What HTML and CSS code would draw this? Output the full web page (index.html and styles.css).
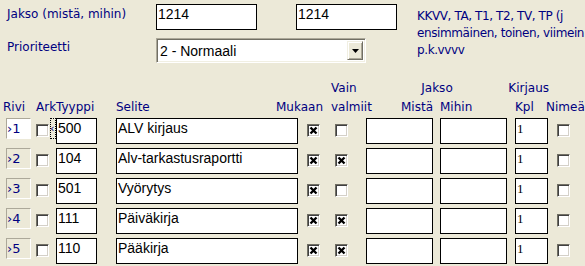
FILE: index.html
```html
<!DOCTYPE html>
<html lang="fi">
<head>
<meta charset="utf-8">
<title>Jakso</title>
<link rel="stylesheet" href="styles.css">
</head>
<body>
<div class="form">
  <div class="top">
    <div class="lbl lbl-jakso">Jakso (mistä, mihin)</div>
    <div class="tb tb-top">1214</div>
    <div class="tb tb-top">1214</div>
    <div class="hint">KKVV, TA, T1, T2, TV, TP (j<br>ensimmäinen, toinen, viimein<br>p.k.vvvv</div>
    <div class="lbl lbl-prio">Prioriteetti</div>
    <div class="select">
      <span class="select-text">2 - Normaali</span>
      <span class="select-btn"><svg width="7" height="4" viewBox="0 0 7 4"><path d="M0 0H7L3.5 4Z" fill="#000"/></svg></span>
    </div>
  </div>

  <div class="head head1">
    <span class="h h-vain">Vain</span>
    <span class="h h-jakso">Jakso</span>
    <span class="h h-kirjaus">Kirjaus</span>
  </div>
  <div class="head head2">
    <span class="h h-rivi">Rivi</span>
    <span class="h h-ark">Ark</span>
    <span class="h h-tyyppi">Tyyppi</span>
    <span class="h h-selite">Selite</span>
    <span class="h h-mukaan">Mukaan</span>
    <span class="h h-valmiit">valmiit</span>
    <span class="h h-mista">Mistä</span>
    <span class="h h-mihin">Mihin</span>
    <span class="h h-kpl">Kpl</span>
    <span class="h h-nimea">Nimeä</span>
  </div>

  <div class="rows">
    <div class="row">
      <div class="rivi rivi-active">›1</div>
      <span class="cb c-ark"></span>
      <span class="focus"><span class="focus-mark">‹</span></span>
      <div class="tb c-tyyppi">500</div>
      <div class="tb c-selite">ALV kirjaus</div>
      <span class="cb c-muk"><svg class="x" viewBox="0 0 11 11"><path d="M2.5 2.5L8.5 8.5M8.5 2.5L2.5 8.5"/></svg></span>
      <span class="cb c-vain"></span>
      <div class="tb c-mista"></div>
      <div class="tb c-mihin"></div>
      <div class="tb c-kpl">1</div>
      <span class="cb c-nimea"></span>
    </div>
    <div class="row">
      <div class="rivi">›2</div>
      <span class="cb c-ark"></span>
      <span class="nofocus"></span>
      <div class="tb c-tyyppi">104</div>
      <div class="tb c-selite">Alv-tarkastusraportti</div>
      <span class="cb c-muk"><svg class="x" viewBox="0 0 11 11"><path d="M2.5 2.5L8.5 8.5M8.5 2.5L2.5 8.5"/></svg></span>
      <span class="cb c-vain"><svg class="x" viewBox="0 0 11 11"><path d="M2.5 2.5L8.5 8.5M8.5 2.5L2.5 8.5"/></svg></span>
      <div class="tb c-mista"></div>
      <div class="tb c-mihin"></div>
      <div class="tb c-kpl">1</div>
      <span class="cb c-nimea"></span>
    </div>
    <div class="row">
      <div class="rivi">›3</div>
      <span class="cb c-ark"></span>
      <span class="nofocus"></span>
      <div class="tb c-tyyppi">501</div>
      <div class="tb c-selite">Vyörytys</div>
      <span class="cb c-muk"><svg class="x" viewBox="0 0 11 11"><path d="M2.5 2.5L8.5 8.5M8.5 2.5L2.5 8.5"/></svg></span>
      <span class="cb c-vain"></span>
      <div class="tb c-mista"></div>
      <div class="tb c-mihin"></div>
      <div class="tb c-kpl">1</div>
      <span class="cb c-nimea"></span>
    </div>
    <div class="row">
      <div class="rivi">›4</div>
      <span class="cb c-ark"></span>
      <span class="nofocus"></span>
      <div class="tb c-tyyppi">111</div>
      <div class="tb c-selite">Päiväkirja</div>
      <span class="cb c-muk"><svg class="x" viewBox="0 0 11 11"><path d="M2.5 2.5L8.5 8.5M8.5 2.5L2.5 8.5"/></svg></span>
      <span class="cb c-vain"><svg class="x" viewBox="0 0 11 11"><path d="M2.5 2.5L8.5 8.5M8.5 2.5L2.5 8.5"/></svg></span>
      <div class="tb c-mista"></div>
      <div class="tb c-mihin"></div>
      <div class="tb c-kpl">1</div>
      <span class="cb c-nimea"></span>
    </div>
    <div class="row">
      <div class="rivi">›5</div>
      <span class="cb c-ark"></span>
      <span class="nofocus"></span>
      <div class="tb c-tyyppi">110</div>
      <div class="tb c-selite">Pääkirja</div>
      <span class="cb c-muk"><svg class="x" viewBox="0 0 11 11"><path d="M2.5 2.5L8.5 8.5M8.5 2.5L2.5 8.5"/></svg></span>
      <span class="cb c-vain"><svg class="x" viewBox="0 0 11 11"><path d="M2.5 2.5L8.5 8.5M8.5 2.5L2.5 8.5"/></svg></span>
      <div class="tb c-mista"></div>
      <div class="tb c-mihin"></div>
      <div class="tb c-kpl">1</div>
      <span class="cb c-nimea"></span>
    </div>
  </div>
</div>
</body>
</html>
```
FILE: styles.css
```css
html, body {
  margin: 0;
  padding: 0;
}
body {
  width: 585px;
  height: 266px;
  overflow: hidden;
  background: #ece9d8;
  font-family: "DejaVu Sans", sans-serif;
  font-size: 12px;
  color: #000080;
}
.form {
  padding-top: 4px;
}

/* top block */
.top {
  display: grid;
  grid-template-columns: 149px 140px 121px 1fr;
  grid-template-rows: 26px 25px;
  row-gap: 8px;
  padding-left: 7px;
}
.lbl {
  line-height: 19px;
  white-space: nowrap;
}
.lbl-jakso {
  padding-top: 1px;
}
.hint {
  grid-column: 4;
  grid-row: 1 / span 2;
  white-space: nowrap;
  line-height: 17px;
  padding-top: 4px;
  letter-spacing: -0.4px;
}
.lbl-prio {
  grid-column: 1;
  grid-row: 2;
}

.tb {
  box-sizing: border-box;
  height: 26px;
  border: 1px solid #000;
  background: #fff;
  color: #000;
  font-family: "Liberation Sans", Arial, sans-serif;
  font-size: 14px;
  line-height: 16px;
  padding: 1px 0 0 1px;
  white-space: nowrap;
  overflow: hidden;
}
.tb-top {
  width: 101px;
}

.select {
  grid-column: 2 / span 2;
  grid-row: 2;
  width: 210px;
  height: 25px;
  box-sizing: border-box;
  display: flex;
  background: #fff;
  border: 1px solid;
  border-color: #aca899 #fff #fff #aca899;
  box-shadow: inset 1px 1px #716f64, inset -1px -1px #f1efe2;
  padding: 2px;
}
.select-text {
  flex: 1;
  color: #000;
  font-family: "Liberation Sans", Arial, sans-serif;
  font-size: 14px;
  line-height: 20px;
  padding-left: 1px;
}
.select-btn {
  width: 16px;
  box-sizing: border-box;
  background: #ece9d8;
  border: 1px solid;
  border-color: #f1efe2 #716f64 #716f64 #f1efe2;
  box-shadow: inset 1px 1px #fff, inset -1px -1px #aca899;
  display: flex;
  align-items: center;
  justify-content: center;
}

/* headers */
.head {
  display: flex;
  line-height: 19px;
  white-space: nowrap;
}
.head1 {
  margin-top: 16px;
}
.h {
  display: flex;
  flex: none;
}
.h-vain { margin-left: 331px; width: 35px; }
.h-jakso { width: 142px; justify-content: center; }
.h-kirjaus { width: 41px; justify-content: flex-end; }

.h-rivi { margin-left: 3px; width: 33px; }
.h-ark { width: 20px; }
.h-tyyppi { width: 60px; }
.h-selite { width: 100px; }
.h-mukaan { width: 107px; justify-content: flex-end; }
.h-valmiit { margin-left: 8px; width: 69px; }
.h-mista { width: 33px; justify-content: flex-end; }
.h-mihin { margin-left: 7px; width: 75px; }
.h-kpl { width: 31px; }
.h-nimea { width: 40px; }

/* rows */
.rows {
  display: flex;
  flex-direction: column;
  row-gap: 4px;
  margin-top: 1px;
  padding-left: 6px;
}
.row {
  display: flex;
  height: 26px;
  align-items: flex-start;
}
.rivi {
  flex: none;
  width: 25px;
  height: 21px;
  box-sizing: border-box;
  border: 1px solid;
  border-color: #aca899 #fff #fff #aca899;
  font-size: 13px;
  line-height: 19px;
  white-space: nowrap;
  overflow: hidden;
}
.rivi-active {
  background: #fff;
}

.cb {
  flex: none;
  width: 13px;
  height: 13px;
  box-sizing: border-box;
  margin-top: 6px;
  background: #fff;
  border: 1px solid;
  border-color: #716f64 #fff #fff #716f64;
  box-shadow: inset 1px 1px #404040, inset -1px -1px #d4d0c8;
  display: flex;
}
.x {
  display: block;
  width: 11px;
  height: 11px;
  fill: none;
  stroke: #000;
  stroke-width: 2.4;
}
.c-ark { margin-left: 5px; }
.focus {
  flex: none;
  margin-left: 1px;
  width: 6px;
  height: 21px;
  box-sizing: border-box;
  border: 1px dotted #000;
  overflow: hidden;
  display: flex;
  align-items: center;
}
.focus-mark {
  font-size: 11px;
  line-height: 10px;
  margin-left: -1px;
}
.nofocus {
  flex: none;
  margin-left: 1px;
  width: 6px;
}
.c-tyyppi { flex: none; width: 41px; }
.c-selite { flex: none; width: 182px; margin-left: 19px; }
.c-muk { margin-left: 9px; }
.c-vain { margin-left: 15px; }
.c-mista { flex: none; width: 67px; margin-left: 18px; }
.c-mihin { flex: none; width: 67px; margin-left: 7px; }
.c-kpl {
  flex: none;
  width: 33px;
  margin-left: 8px;
  font-family: "Liberation Serif", "Times New Roman", serif;
  font-size: 13px;
  padding-top: 2px;
}
.c-nimea { margin-left: 9px; }
```
